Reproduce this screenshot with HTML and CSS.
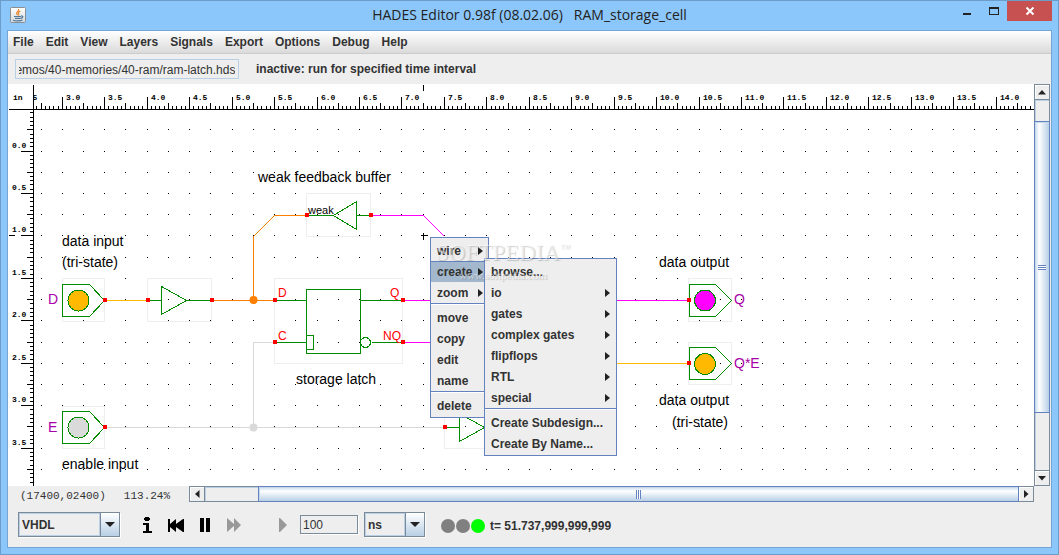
FILE: index.html
```html
<!DOCTYPE html>
<html lang="en">
<head>
<meta charset="utf-8">
<title>HADES Editor 0.98f (08.02.06) RAM_storage_cell</title>
<link rel="stylesheet" href="styles.css">
</head>
<body>
<div class="window">
  <header class="titlebar">
    <svg class="app-icon" width="16" height="16" viewBox="0 0 16 16" aria-hidden="true">
      <defs><linearGradient id="paper" x1="0" y1="0" x2="0" y2="1"><stop offset="0" stop-color="#fff"/><stop offset="1" stop-color="#d3d8dc"/></linearGradient></defs>
      <rect x=".5" y=".5" width="15" height="15" rx="1" fill="url(#paper)" stroke="#8b8f94"/>
      <path d="M8.6 2C9.5 4 6.2 4.8 6.7 6.5c.2.8.8 1 .8 1.8M10.4 4C8.2 5.2 8 6 8.7 7c.4.6.2 1-.2 1.5" fill="none" stroke="#e8862a" stroke-width="1.2"/>
      <path d="M4 9.5h7M5 11.3h5.6M11 9c2.6-.4 2.3 2-.2 2.4M3 13.2c2 1 7.500 1 9.500-.2" fill="none" stroke="#53799a" stroke-width="1.200"/>
    </svg>
    <h1 class="title">HADES Editor 0.98f (08.02.06)&nbsp;&nbsp; RAM_storage_cell</h1>
    <div class="window-buttons">
      <button class="win-btn" aria-label="Minimize"><svg width="10" height="10" viewBox="0 0 10 10"><path d="M1 7h8v2H1z" fill="#222"/></svg></button>
      <button class="win-btn" aria-label="Maximize"><svg width="10" height="10" viewBox="0 0 10 10"><path d="M0 1h10v8H0zM1 3v5h8V3z" fill="#222" fill-rule="evenodd"/></svg></button>
      <button class="win-btn win-close" aria-label="Close"><svg width="10" height="10" viewBox="0 0 10 10"><path d="M1.500 1.500l7 7M8.500 1.500l-7 7" stroke="#fff" stroke-width="2"/></svg></button>
    </div>
  </header>

  <main class="frame">
    <nav class="menubar">
      <button>File</button><button>Edit</button><button>View</button><button>Layers</button><button>Signals</button><button>Export</button><button>Options</button><button>Debug</button><button>Help</button>
    </nav>
    <div class="infobar">
      <input class="path" id="path" aria-label="Design file" readonly value="/hades/examples/simdemos/40-memories/40-ram/ram-latch.hds">
      <span class="message">inactive: run for specified time interval</span>
    </div>

    <section class="editor">
      <div class="canvas">
        <svg class="sheet" role="img" aria-label="RAM storage cell schematic">
          <g transform="translate(-7.5 -83.5)">
            <g id="grid"></g>
            <g class="bounds">
              <path d="M62 278h42v43h-42zM147 278h64v43h-64zM306 193h64v43h-64zM274 278h128v85h-128zM62 406h42v42h-42zM444 406h64v42h-64zM688 278h43v43h-43zM688 342h43v42h-43z"/>
            </g>
            <g class="wires">
              <path class="amber" d="M104 300h43M600 363h88"/>
              <path class="orange" d="M211 300h63M253 300v-64l21-21h32"/>
              <path class="magenta" d="M370 215h53l21 21M402 300h286M402 342h80"/>
              <path class="grey" d="M104 427h340M253 427v-85h21"/>
              <circle class="orange-dot" cx="253" cy="299.500" r="4"/>
              <circle class="grey-dot" cx="253" cy="427" r="4"/>
            </g>
            <g class="parts">
              <path d="M62 284h27l15 16l-15 16h-27zM62 411h27l15 16l-15 16h-27zM689 284h26l16 16l-16 16h-26zM689 347h26l16 16l-16 16h-26z"/>
              <path d="M147 300h14M161 286l25 14l-25 14zM186 300h25"/>
              <path d="M306 215h27M356 201v28l-23-14zM356 215h14"/>
              <path d="M306 289h54v64h-54zM306 335h7v14h-7M274 300h32M274 342h32M360 300h42M371 342h31"/>
              <circle cx="365" cy="342" r="5"/>
              <path d="M444 427h15M459 413l25 14l-25 14z"/>
              <circle class="amber-lamp" cx="78" cy="300" r="10.500"/>
              <circle class="grey-lamp" cx="78" cy="427" r="10.500"/>
              <circle class="magenta-lamp" cx="704.500" cy="300" r="10.500"/>
              <circle class="amber-lamp" cx="704.500" cy="363.500" r="10.500"/>
            </g>
            <g id="pins" class="pins"></g>
            <path class="cursor" d="M420 235h7M423 232v7"/>
          </g>
          <g transform="translate(-8 -84)">
            <g class="labels">
              <text x="258" y="182">weak feedback buffer</text>
              <text x="62" y="246">data input</text>
              <text x="62" y="267">(tri-state)</text>
              <text x="296" y="384">storage latch</text>
              <text x="62" y="469">enable input</text>
              <text x="659" y="267">data output</text>
              <text x="659" y="405">data output</text>
              <text x="672" y="427">(tri-state)</text>
              <text class="small" x="308" y="214">weak</text>
            </g>
            <g class="ports">
              <text x="48" y="304">D</text><text x="48" y="432">E</text><text x="734" y="304">Q</text><text x="734" y="368">Q*E</text>
            </g>
            <g class="pin-names">
              <text x="278" y="297">D</text><text x="278" y="340">C</text><text x="390" y="297">Q</text><text x="383" y="340">NQ</text>
            </g>
            <g id="ruler-text" class="rulers"></g>
          </g>
          <g transform="translate(-7.5 -83.5)"><g id="rulers" class="rulers"></g></g>
        </svg>

        <div class="popup popup-main" role="menu">
          <button class="item" role="menuitem">wire<i class="arrow"></i></button>
          <button class="item active" role="menuitem">create<i class="arrow"></i></button>
          <button class="item" role="menuitem">zoom<i class="arrow"></i></button>
          <hr>
          <button class="item" role="menuitem">move</button>
          <button class="item" role="menuitem">copy</button>
          <button class="item" role="menuitem">edit</button>
          <button class="item" role="menuitem">name</button>
          <hr>
          <button class="item" role="menuitem">delete</button>
        </div>
        <div class="popup popup-create" role="menu">
          <button class="item" role="menuitem">browse...</button>
          <button class="item" role="menuitem">io<i class="arrow"></i></button>
          <button class="item" role="menuitem">gates<i class="arrow"></i></button>
          <button class="item" role="menuitem">complex gates<i class="arrow"></i></button>
          <button class="item" role="menuitem">flipflops<i class="arrow"></i></button>
          <button class="item" role="menuitem">RTL<i class="arrow"></i></button>
          <button class="item" role="menuitem">special<i class="arrow"></i></button>
          <hr>
          <button class="item" role="menuitem">Create Subdesign...</button>
          <button class="item" role="menuitem">Create By Name...</button>
        </div>
        <div class="watermark"><span class="mark">SOFTPEDIA<sup>™</sup></span><span class="site">www.softpedia.com</span></div>
      </div>

      <div class="scroll vertical">
        <button class="scroll-btn" aria-label="Scroll up"><svg width="8" height="5" viewBox="0 0 8 5"><path d="M4 0l4 4.500H0z"/></svg></button>
        <div class="track"><div class="before"></div><div class="thumb"><div class="grip"></div></div><div class="after"></div></div>
        <button class="scroll-btn" aria-label="Scroll down"><svg width="8" height="5" viewBox="0 0 8 5"><path d="M4 4.500L8 0H0z"/></svg></button>
      </div>
    </section>

    <div class="status">
      <div class="coords"><span>(17400,02400)</span><span>113.24%</span></div>
      <div class="scroll horizontal">
        <button class="scroll-btn" aria-label="Scroll left"><svg width="5" height="8" viewBox="0 0 5 8"><path d="M0 4l4.500-4v8z"/></svg></button>
        <div class="track"><div class="before"></div><div class="thumb"><div class="grip"></div></div></div>
        <button class="scroll-btn" aria-label="Scroll right"><svg width="5" height="8" viewBox="0 0 5 8"><path d="M4.500 4L0 0v8z"/></svg></button>
      </div>
    </div>

    <footer class="controls">
      <div class="combo combo-wide"><select aria-label="Language"><option>VHDL</option></select><span class="combo-arrow"><svg width="10" height="5" viewBox="0 0 10 5"><path d="M0 0h10L5 5z"/></svg></span></div>
      <div class="transport">
        <button aria-label="Info"><svg width="20" height="16" viewBox="0 0 20 16"><path d="M8 0h4v1h1v2h-1v1H8V3H7V1h1zM6 6h6v8h3v2H6v-2h3V8H6z"/></svg></button>
        <button aria-label="Rewind"><svg width="20" height="16" viewBox="0 0 20 16"><path d="M2 2h2v5l6-5v5l7-5h1v13h-1l-7-5v5l-6-5v5H2z"/></svg></button>
        <button aria-label="Pause"><svg width="20" height="16" viewBox="0 0 20 16"><path d="M5 1h4v14H5zM11 1h4v14h-4z"/></svg></button>
        <button aria-label="Fast forward" disabled><svg width="20" height="16" viewBox="0 0 20 16"><path d="M3 1l7 6V1l7 7l-7 7V9l-7 6z"/></svg></button>
        <button class="step" aria-label="Run for interval" disabled><svg width="20" height="16" viewBox="0 0 20 16"><path d="M6 1h1l7 7l-7 7H6z"/></svg></button>
      </div>
      <input class="interval" aria-label="Interval" value="100">
      <div class="combo combo-unit"><select aria-label="Time unit"><option>ns</option></select><span class="combo-arrow"><svg width="10" height="5" viewBox="0 0 10 5"><path d="M0 0h10L5 5z"/></svg></span></div>
      <div class="lamps"><span class="lamp"></span><span class="lamp"></span><span class="lamp on"></span></div>
      <span class="time">t= 51.737,999,999,999</span>
    </footer>
  </main>
</div>
<script src="script.js"></script>
</body>
</html>
```

FILE: styles.css
```css
* { box-sizing: border-box; }

body {
  margin: 0;
  font: bold 12px/16px "Liberation Sans", Arial, sans-serif;
  color: #333;
}

button, input, select { font: inherit; color: inherit; margin: 0; padding: 0; border: 0; background: none; }

.window {
  display: flex;
  flex-direction: column;
  height: 100vh;
  padding: 0 6px 6px;
  border: 1px solid #6c9cc8;
  background: #8cc7fb;
}

.titlebar {
  display: grid;
  grid-template-columns: 1fr auto 1fr;
  align-items: start;
  height: 29px;
  flex: none;
}
.app-icon { margin: 6px 0 0 3px; }
.title {
  margin: 0;
  font: 14px/28px "Open Sans", "Noto Sans", sans-serif;
  color: #222;
}
.window-buttons { display: flex; justify-content: flex-end; height: 20px; }
.win-btn { width: 27px; line-height: 0; }
.win-close { width: 45px; background: #c75050; }

.frame {
  display: flex;
  flex-direction: column;
  flex: 1;
  min-height: 0;
  border: 1px solid #74a5d4;
  background: #eee;
}

.menubar {
  display: flex;
  gap: 12px;
  flex: none;
  height: 23px;
  padding: 0 5px;
  border-bottom: 1px solid #ccc;
  background: linear-gradient(#fff, #dadada);
}

.infobar { display: flex; align-items: center; gap: 17px; flex: none; height: 30px; padding: 0 7px; }
.path {
  width: 224px;
  height: 20px;
  padding: 2px 3px 0;
  border: 1px solid #b8cfe5;
  font-weight: normal;
}

.editor { display: flex; flex: 1; min-height: 0; }
.canvas { position: relative; flex: 1; min-width: 0; overflow: hidden; background: #fff; }
.sheet { display: block; width: 100%; height: 100%; }

.bounds path, .wires path, .parts path, .parts circle, .rulers path, .cursor { fill: none; stroke-width: 1; shape-rendering: crispEdges; }
.dot { fill: #000; shape-rendering: crispEdges; }
.bounds path { stroke: #eee; }
.wires .amber { stroke: #ffb900; }
.wires .orange { stroke: #ff8000; }
.wires .magenta { stroke: #f0f; }
.wires .grey { stroke: #dadada; }
.orange-dot { fill: #ff8000; }
.grey-dot { fill: #dadada; }
.parts path, .parts circle { stroke: #008b00; }
.parts .amber-lamp { fill: #ffb900; }
.parts .grey-lamp { fill: #dadada; }
.parts .magenta-lamp { fill: #f0f; }
.pins { fill: #f00; shape-rendering: crispEdges; }
.cursor, .rulers path { stroke: #000; }
.labels { font-size: 14px; font-weight: normal; fill: #000; }
.labels .small { font-size: 11px; }
.ports { font-size: 14px; font-weight: normal; fill: #a800a8; }
.pin-names { font-size: 12px; font-weight: normal; fill: #f00; }
.rulers text { font: bold 8px "Liberation Mono", monospace; fill: #000; }
.rulers .paper { fill: #fff; }

.popup {
  position: absolute;
  display: flex;
  flex-direction: column;
  padding: 2px 0 1px;
  border: 1px solid #6382bf;
  background: #eee;
}
.popup-main { left: 422px; top: 153px; width: 59px; }
.popup-create { left: 476px; top: 174px; width: 133px; }
.item {
  display: flex;
  align-items: center;
  justify-content: space-between;
  height: 21px;
  padding: 0 6px;
  border-top: 1px solid transparent;
}
.popup-main .item { padding-right: 5px; }
.item.active { background: #a3b8cc; border-color: #6382bf; }
.popup hr { width: 100%; height: 4px; margin: 0; border: solid #6382bf; border-width: 1px 0 0; background: linear-gradient(#fff 1px, transparent 1px); }
.arrow { border: solid transparent; border-width: 4px 0 4px 5px; border-left-color: #222; }

.watermark {
  position: absolute;
  left: 428px;
  top: 154px;
  display: flex;
  flex-direction: column;
  align-items: center;
  color: rgba(255, 255, 255, .5);
  text-shadow: 1px 1px 1px rgba(90, 90, 90, .3);
  font-weight: normal;
  pointer-events: none;
}
.mark { font: 23px/30px "Liberation Serif", serif; }
.mark sup { font-size: 10px; line-height: 0; }
.site { font: 11px/14px "Liberation Serif", serif; }

.scroll { display: flex; flex: none; background: #eee; border: 1px solid #7a8a99; }
.scroll-btn { display: flex; align-items: center; justify-content: center; flex: none; width: 14px; height: 14px; background: #eee; box-shadow: inset 1px 1px #fff; fill: #222; }
.track { display: flex; flex: 1; box-shadow: inset 1px 1px #b8cfe5; }
.thumb { display: flex; align-items: center; justify-content: center; border: 1px solid #6382bf; box-shadow: inset 1px 1px #c6d9ec; }
.vertical { flex-direction: column; width: 16px; margin-right: 1px; }
.vertical .track { flex-direction: column; border: solid #7a8a99; border-width: 1px 0; }
.vertical .before { flex: 21; }
.vertical .thumb { flex: 292; margin: 0 -1px; background: linear-gradient(90deg, #c8dbee, #fff 30%, #b8cfe5); }
.vertical .after { flex: 57; }
.vertical .grip { width: 8px; height: 5px; background: repeating-linear-gradient(#6382bf 0 1px, #fff 1px 2px); }
.horizontal { flex: 1; height: 16px; margin-right: 17px; }
.horizontal .track { border: solid #7a8a99; border-width: 0 1px; }
.horizontal .before { flex: 53; }
.horizontal .thumb { flex: 760; margin: -1px -1px -1px 0; background: linear-gradient(#c8dbee, #fff 30%, #b8cfe5); }
.horizontal .grip { width: 5px; height: 9px; background: repeating-linear-gradient(90deg, #6382bf 0 1px, #fff 1px 2px); }

.status { display: flex; flex: none; height: 17px; }
.coords { display: flex; gap: 18px; width: 181px; padding: 2px 0 0 12px; font: 11px/16px "Liberation Mono", "Courier New", monospace; }

.controls { display: flex; align-items: center; flex: none; height: 44px; padding: 0 10px 1px; }
.combo { display: flex; height: 25px; border: 1px solid #7a8a99; box-shadow: 1px 1px #fff; }
.combo select { flex: 1; min-width: 0; padding: 0 2px; appearance: none; border: 1px solid #b8cfe5; }
.combo-arrow { display: flex; align-items: center; justify-content: center; width: 19px; border-left: 1px solid #7a8a99; background: linear-gradient(#fff, #b8cfe5); fill: #222; pointer-events: none; }
.combo-wide { width: 102px; }
.combo-unit { width: 61px; margin-left: 6px; }
.transport { display: flex; gap: 9px; margin: 0 7px 0 17px; }
.transport button { width: 20px; height: 16px; line-height: 0; }
.transport button:disabled { fill: #999; }
.transport .step { margin-left: 20px; }
.interval { width: 58px; height: 19px; padding: 0 2px; border: 1px solid #7a8a99; box-shadow: 1px 1px #fff; font-weight: normal; }
.lamps { display: flex; gap: 1px; margin: 2px 5px 0 16px; }
.lamp { width: 14px; height: 14px; border-radius: 50%; background: #808080; }
.lamp.on { background: #0f0; }
.time { padding-top: 2px; }
```

FILE: script.js
```js
const NS = "http://www.w3.org/2000/svg";
const HALF_INCH = 42.45;
const ORIGIN_X = 62.3;
const ORIGIN_Y = 151;
const RIGHT = Math.max(1033, window.innerWidth - 26);
const BOTTOM = Math.max(486, window.innerHeight - 69);

function add(parent, name, attrs, text) {
  const el = document.createElementNS(NS, name);
  for (const key in attrs) el.setAttribute(key, attrs[key]);
  if (text) el.textContent = text;
  parent.appendChild(el);
}

const grid = document.getElementById("grid");
for (let i = 0; ORIGIN_X + i * HALF_INCH / 2 < RIGHT + 20; i++) {
  for (let j = -1; ORIGIN_Y + j * HALF_INCH / 2 < BOTTOM; j++) {
    const x = Math.floor(ORIGIN_X + (i - 1) * HALF_INCH / 2);
    const y = Math.floor(ORIGIN_Y + j * HALF_INCH / 2);
    add(grid, "rect", { class: "dot", x: x - 0.5, y: y - 0.5, width: 1, height: 1 });
  }
}

const pins = document.getElementById("pins");
[[104, 300], [147, 300], [211, 300], [274, 300], [402, 300], [274, 342], [402, 342],
 [306, 215], [370, 215], [104, 427], [444, 427], [688, 300], [688, 363]]
  .forEach(([x, y]) => add(pins, "rect", { x: x - 1.5, y: y - 2.5, width: 4, height: 4 }));

const rulers = document.getElementById("rulers");
const rulerText = document.getElementById("ruler-text");
let d = "M8 109H" + (RIGHT + 20) + "M33 84V" + BOTTOM + "M423 84v6M8 235h6";
for (let k = -6; ORIGIN_X + k * HALF_INCH / 10 < RIGHT + 20; k++) {
  const x = Math.floor(ORIGIN_X + k * HALF_INCH / 10);
  d += "M" + x + " 109v-" + (k % 10 === 0 ? 13 : k % 5 === 0 ? 7 : 4);
}
for (let k = -9; ORIGIN_Y + k * HALF_INCH / 10 < BOTTOM; k++) {
  const y = Math.floor(ORIGIN_Y + k * HALF_INCH / 10);
  d += "M33 " + y + "h-" + (k % 10 === 0 ? 13 : k % 5 === 0 ? 7 : 4);
}
for (let i = -1; ORIGIN_X + i * HALF_INCH < RIGHT; i++) {
  const x = Math.floor(ORIGIN_X + i * HALF_INCH);
  add(rulerText, "text", { x: x + 4, y: 100 }, (3 + i / 2).toFixed(1));
}
add(rulerText, "rect", { class: "paper", x: 8, y: 85, width: 25, height: 23 });
add(rulerText, "text", { x: 13, y: 100 }, "in");
for (let i = 0; ORIGIN_Y + i * HALF_INCH < BOTTOM; i++) {
  const y = Math.floor(ORIGIN_Y + i * HALF_INCH);
  add(rulerText, "text", { x: 12, y: y - 3 }, (i / 2).toFixed(1));
}
add(rulers, "path", { d });

const path = document.getElementById("path");
path.scrollLeft = path.scrollWidth;
```
